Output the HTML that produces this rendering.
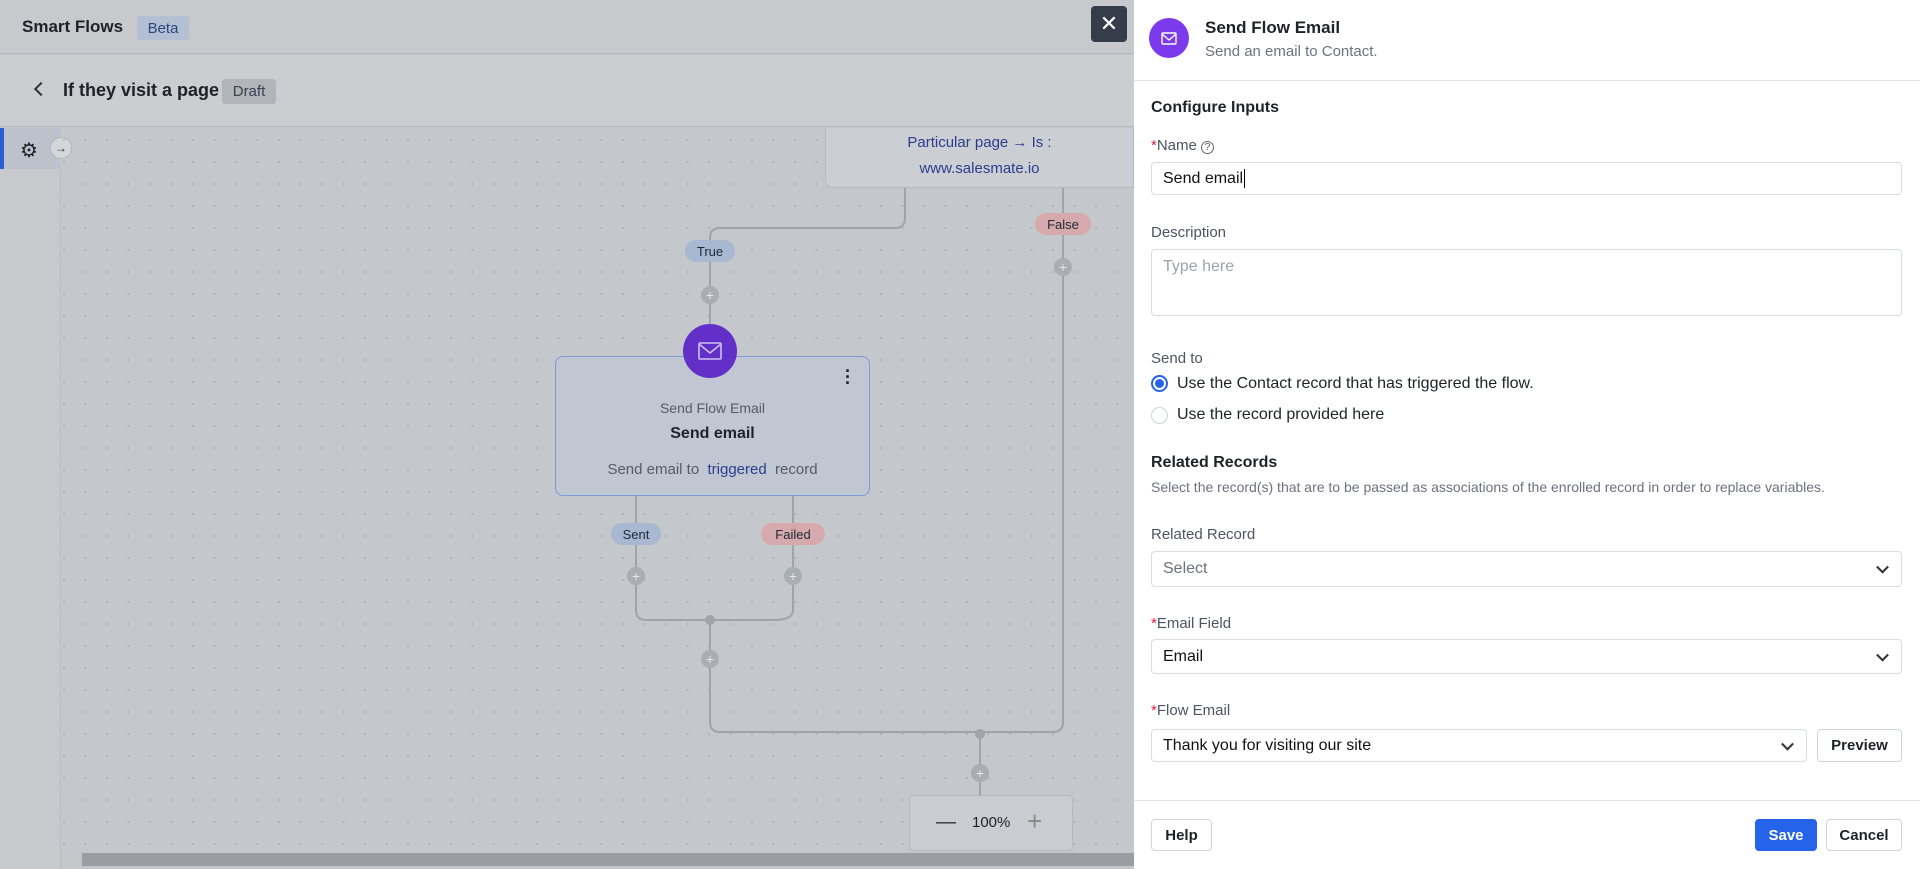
<!DOCTYPE html>
<html><head><meta charset="utf-8"><style>
*{box-sizing:border-box;margin:0;padding:0}
body{width:1920px;height:869px;overflow:hidden;font-family:"Liberation Sans",sans-serif;position:relative;background:#c4c7cc;color:#1f2328}
.a{position:absolute}
.lbl{position:absolute;left:1151px;font-size:15px;color:#4b5563}
.req{color:#e11d48}
.inp{position:absolute;left:1151px;width:751px;border:1px solid #d9dce1;border-radius:4px;background:#fff;font-size:16px;padding-left:11px;display:flex;align-items:center}
.chev{position:absolute;right:14px;top:50%;width:9px;height:9px;border-right:2px solid #333;border-bottom:2px solid #333;transform:translateY(-70%) rotate(45deg)}
.btn{position:absolute;border:1px solid #d1d5db;border-radius:4px;background:#fff;font-size:15px;font-weight:bold;display:flex;align-items:center;justify-content:center}
.pill{position:absolute;height:22px;border-radius:11px;font-size:13px;display:flex;align-items:center;justify-content:center;color:#1f2937}
</style></head><body>
<!-- header -->
<div class="a" style="left:0;top:0;width:1134px;height:54px;background:#c8c9cd;border-bottom:1px solid #b5b8bd"></div>
<div class="a" style="left:22px;top:17px;font-size:17px;font-weight:bold">Smart Flows</div>
<div class="a" style="left:137px;top:16px;width:52px;height:24px;background:#b3bfd3;border-radius:3px;font-size:15px;color:#2b4a80;display:flex;align-items:center;justify-content:center">Beta</div>
<div class="a" style="left:1091px;top:6px;width:36px;height:36px;background:#363d4a;border-radius:4px;color:#fff;font-size:22px;display:flex;align-items:center;justify-content:center">✕</div>
<div class="a" style="left:0;top:55px;width:1134px;height:72px;background:#cbcdd0;border-bottom:1px solid #b5b8bd"></div>
<div class="a" style="left:36px;top:84px;width:10px;height:10px;border-left:2px solid #333;border-bottom:2px solid #333;transform:rotate(45deg)"></div>
<div class="a" style="left:63px;top:80px;font-size:18px;font-weight:bold">If they visit a page</div>
<div class="a" style="left:222px;top:79px;width:54px;height:25px;background:#b1b4b9;border-radius:3px;font-size:15px;color:#374151;display:flex;align-items:center;justify-content:center">Draft</div>
<!-- sidebar -->
<div class="a" style="left:0;top:128px;width:61px;height:741px;background:#c7c9cc;border-right:1px solid #b9bcc1"></div>
<div class="a" style="left:0;top:128px;width:61px;height:41px;background:#bcc2cc;border-left:4px solid #2e5fd0"></div>
<div class="a" style="left:20px;top:138px;font-size:20px;color:#222">⚙</div>
<div class="a" style="left:50px;top:137px;width:22px;height:22px;border-radius:50%;background:#d4d6d9;border:1px solid #b5b8bd;font-size:12px;display:flex;align-items:center;justify-content:center">→</div>
<!-- canvas -->
<svg class="a" style="left:62px;top:128px" width="1072" height="723">
<defs><pattern id="d" width="21.5" height="22" patternUnits="userSpaceOnUse"><circle cx="2" cy="12" r="0.9" fill="#a3a7ae"/></pattern></defs>
<rect width="1072" height="723" fill="url(#d)"/>
<g fill="none" stroke="#9fa4ab" stroke-width="2">
<path d="M843 59 V90 Q843 100 833 100 H658 Q648 100 648 110 V197"/>
<path d="M1001 59 V594 Q1001 604 991 604 H658 Q648 604 648 594 V492"/>
<path d="M574 368 V482 Q574 492 584 492 H712 Q731 492 731 482 V368"/>
<path d="M918 604 V723"/>
</g>
</svg>
<div class="a" style="left:825px;top:128px;width:309px;height:60px;background:#cbced3;border:1px solid #b7bac0;border-top:none;border-radius:0 0 0 8px"></div>
<div class="a" style="left:825px;top:128px;width:309px;text-align:center;font-size:15px;color:#2b3d8f;line-height:26px;padding-top:2px">Particular page → Is :<br>www.salesmate.io</div>
<div class="pill" style="left:685px;top:240px;width:50px;background:#a8b8d0">True</div>
<div class="pill" style="left:1035px;top:213px;width:56px;background:#d6a9ad">False</div>
<div class="pill" style="left:611px;top:523px;width:50px;background:#a8b8d0">Sent</div>
<div class="pill" style="left:761px;top:523px;width:64px;background:#d6a9ad">Failed</div>
<div class="a" style="left:701px;top:286px;width:18px;height:18px;border-radius:50%;background:#a9adb4;color:#e5e7eb;font-size:14px;display:flex;align-items:center;justify-content:center">+</div>
<div class="a" style="left:1054px;top:258px;width:18px;height:18px;border-radius:50%;background:#a9adb4;color:#e5e7eb;font-size:14px;display:flex;align-items:center;justify-content:center">+</div>
<div class="a" style="left:627px;top:567px;width:18px;height:18px;border-radius:50%;background:#a9adb4;color:#e5e7eb;font-size:14px;display:flex;align-items:center;justify-content:center">+</div>
<div class="a" style="left:784px;top:567px;width:18px;height:18px;border-radius:50%;background:#a9adb4;color:#e5e7eb;font-size:14px;display:flex;align-items:center;justify-content:center">+</div>
<div class="a" style="left:701px;top:650px;width:18px;height:18px;border-radius:50%;background:#a9adb4;color:#e5e7eb;font-size:14px;display:flex;align-items:center;justify-content:center">+</div>
<div class="a" style="left:971px;top:764px;width:18px;height:18px;border-radius:50%;background:#a9adb4;color:#e5e7eb;font-size:14px;display:flex;align-items:center;justify-content:center">+</div>
<div class="a" style="left:705px;top:615px;width:10px;height:10px;border-radius:50%;background:#a0a4ab"></div>
<div class="a" style="left:975px;top:729px;width:10px;height:10px;border-radius:50%;background:#a0a4ab"></div>
<div class="a" style="left:555px;top:356px;width:315px;height:140px;background:#c0c7d3;border:1px solid #7c9bd0;border-radius:8px"></div>
<div class="a" style="left:683px;top:324px;width:54px;height:54px;border-radius:50%;background:#6230c8;display:flex;align-items:center;justify-content:center"><svg width="24" height="18" viewBox="0 0 24 18"><rect x="1" y="1" width="22" height="16" rx="1" fill="none" stroke="#cfc0f0" stroke-width="1.6"/><path d="M1 2 L12 11 L23 2" fill="none" stroke="#cfc0f0" stroke-width="1.6"/></svg></div>
<div class="a" style="left:845px;top:368px;font-size:18px;font-weight:bold;line-height:6px">·<br>·<br>·</div>
<div class="a" style="left:555px;top:400px;width:315px;text-align:center;font-size:14px;color:#555c66">Send Flow Email</div>
<div class="a" style="left:555px;top:425px;width:315px;text-align:center;font-size:16px;font-weight:bold">Send email</div>
<div class="a" style="left:555px;top:461px;width:315px;text-align:center;font-size:15px;color:#555c66">Send email to &nbsp;<span style="color:#2b3d8f">triggered</span>&nbsp; record</div>
<div class="a" style="left:909px;top:795px;width:164px;height:56px;background:#c9ccd0;border:1px solid #b5b8bd;border-radius:4px"></div>
<div class="a" style="left:936px;top:811px;font-size:20px;color:#333">—</div>
<div class="a" style="left:972px;top:814px;font-size:15px">100%</div>
<div class="a" style="left:1027px;top:806px;font-size:26px;color:#888">+</div>
<div class="a" style="left:62px;top:851px;width:1072px;height:18px;background:#c4c6ca"></div>
<div class="a" style="left:82px;top:853px;width:1052px;height:13px;background:#9a9da2"></div>
<!-- panel -->
<div class="a" style="left:1134px;top:0;width:786px;height:869px;background:#fff"></div>
<div class="a" style="left:1149px;top:18px;width:40px;height:40px;border-radius:50%;background:#7c3aed;display:flex;align-items:center;justify-content:center"><svg width="16" height="13" viewBox="0 0 16 13"><rect x="1" y="1" width="14" height="11" rx="1" fill="none" stroke="#fff" stroke-width="1.4"/><path d="M1 2 L8 8 L15 2" fill="none" stroke="#fff" stroke-width="1.4"/></svg></div>
<div class="a" style="left:1205px;top:18px;font-size:17px;font-weight:bold">Send Flow Email</div>
<div class="a" style="left:1205px;top:43px;font-size:15px;color:#6b7280">Send an email to Contact.</div>
<div class="a" style="left:1134px;top:80px;width:786px;height:1px;background:#e1e4e8"></div>
<div class="a" style="left:1151px;top:99px;font-size:16px;font-weight:bold">Configure Inputs</div>
<div class="lbl" style="top:137px"><span class="req">*</span>Name <span style="font-size:13px;border:1px solid #666;border-radius:50%;display:inline-block;width:13px;height:13px;line-height:11px;text-align:center;font-size:10px">?</span></div>
<div class="inp" style="top:162px;height:33px;color:#111">Send email<span style="border-left:1px solid #000;height:19px;margin-left:1px"></span></div>
<div class="lbl" style="top:224px">Description</div>
<div class="inp" style="top:249px;height:67px;align-items:flex-start;padding-top:8px;color:#9ca3af">Type here</div>
<div class="lbl" style="top:350px">Send to</div>
<div class="a" style="left:1151px;top:375px;width:17px;height:17px;border-radius:50%;border:2px solid #2563eb;display:flex;align-items:center;justify-content:center"><div style="width:9px;height:9px;border-radius:50%;background:#2563eb"></div></div>
<div class="a" style="left:1177px;top:375px;font-size:16px">Use the Contact record that has triggered the flow.</div>
<div class="a" style="left:1151px;top:407px;width:17px;height:17px;border-radius:50%;border:1px solid #cfd3d8"></div>
<div class="a" style="left:1177px;top:406px;font-size:16px">Use the record provided here</div>
<div class="a" style="left:1151px;top:454px;font-size:16px;font-weight:bold">Related Records</div>
<div class="a" style="left:1151px;top:479px;font-size:14px;color:#6b7280">Select the record(s) that are to be passed as associations of the enrolled record in order to replace variables.</div>
<div class="lbl" style="top:526px">Related Record</div>
<div class="inp" style="top:551px;height:36px;color:#6b7280">Select<span class="chev"></span></div>
<div class="lbl" style="top:615px"><span class="req">*</span>Email Field</div>
<div class="inp" style="top:639px;height:35px;color:#111">Email<span class="chev"></span></div>
<div class="lbl" style="top:702px"><span class="req">*</span>Flow Email</div>
<div class="inp" style="top:729px;height:33px;width:656px;color:#111">Thank you for visiting our site<span class="chev"></span></div>
<div class="btn" style="left:1817px;top:729px;width:85px;height:33px">Preview</div>
<div class="a" style="left:1134px;top:800px;width:786px;height:1px;background:#e1e4e8"></div>
<div class="btn" style="left:1151px;top:819px;width:61px;height:32px">Help</div>
<div class="btn" style="left:1755px;top:819px;width:62px;height:32px;background:#2563eb;border-color:#2563eb;color:#fff">Save</div>
<div class="btn" style="left:1826px;top:819px;width:76px;height:32px">Cancel</div>
</body></html>
